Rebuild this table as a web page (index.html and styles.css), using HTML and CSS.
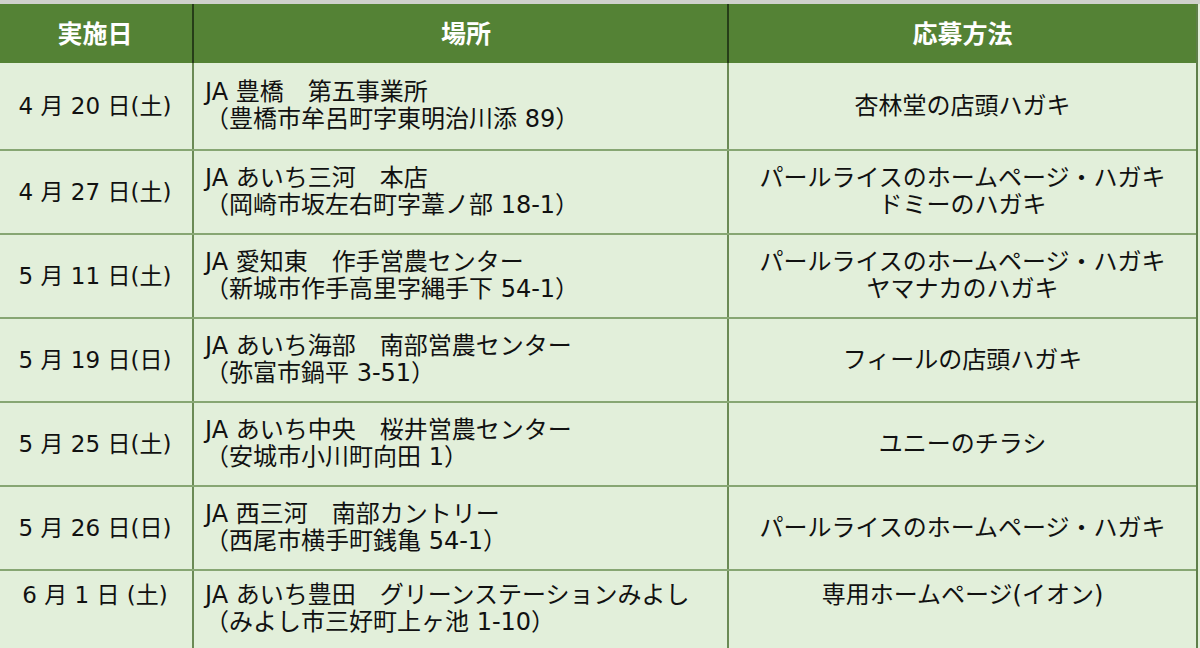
FILE: index.html
```html
<!DOCTYPE html>
<html lang="ja">
<head>
<meta charset="utf-8">
<link rel="stylesheet" href="styles.css">
</head>
<body>
<div class="topline"></div>
<div class="table">
  <div class="row head">
    <div class="cell c1">実施日</div>
    <div class="cell c2">場所</div>
    <div class="cell c3">応募方法</div>
  </div>
  <div class="row first">
    <div class="cell c1">4 月 20 日(土)</div>
    <div class="cell c2"><span>JA 豊橋　第五事業所</span><span>（豊橋市牟呂町字東明治川添 89）</span></div>
    <div class="cell c3"><span>杏林堂の店頭ハガキ</span></div>
  </div>
  <div class="row">
    <div class="cell c1">4 月 27 日(土)</div>
    <div class="cell c2"><span>JA あいち三河　本店</span><span>（岡崎市坂左右町字葦ノ部 18-1）</span></div>
    <div class="cell c3"><span>パールライスのホームページ・ハガキ</span><span>ドミーのハガキ</span></div>
  </div>
  <div class="row">
    <div class="cell c1">5 月 11 日(土)</div>
    <div class="cell c2"><span>JA 愛知東　作手営農センター</span><span>（新城市作手高里字縄手下 54-1）</span></div>
    <div class="cell c3"><span>パールライスのホームページ・ハガキ</span><span>ヤマナカのハガキ</span></div>
  </div>
  <div class="row">
    <div class="cell c1">5 月 19 日(日)</div>
    <div class="cell c2"><span>JA あいち海部　南部営農センター</span><span>（弥富市鍋平 3-51）</span></div>
    <div class="cell c3"><span>フィールの店頭ハガキ</span></div>
  </div>
  <div class="row">
    <div class="cell c1">5 月 25 日(土)</div>
    <div class="cell c2"><span>JA あいち中央　桜井営農センター</span><span>（安城市小川町向田 1）</span></div>
    <div class="cell c3"><span>ユニーのチラシ</span></div>
  </div>
  <div class="row">
    <div class="cell c1">5 月 26 日(日)</div>
    <div class="cell c2"><span>JA 西三河　南部カントリー</span><span>（西尾市横手町銭亀 54-1）</span></div>
    <div class="cell c3"><span>パールライスのホームページ・ハガキ</span></div>
  </div>
  <div class="row last">
    <div class="cell c1">6 月 1 日 (土)</div>
    <div class="cell c2"><span>JA あいち豊田　グリーンステーションみよし</span><span>（みよし市三好町上ヶ池 1-10）</span></div>
    <div class="cell c3"><span>専用ホームページ(イオン)</span></div>
  </div>
</div>
</body>
</html>
```

FILE: styles.css
```css
html, body {
  margin: 0;
  padding: 0;
  background: #e2efda;
  overflow: hidden;
}
body {
  width: 1200px;
  height: 648px;
  font-family: "DejaVu Sans", "Noto Sans CJK JP", sans-serif;
  color: #111;
}
.topline {
  height: 4px;
  background: #cfd1cc;
}
.table {
  width: 1198px;
  border-right: 2px solid #5f7f4a;
  box-sizing: border-box;
}
.row {
  display: grid;
  grid-template-columns: 192px 535px 1fr;
  height: 84px;
  border-bottom: 2px solid #87a673;
  box-sizing: border-box;
}
.row.first { height: 88px; }
.row.last { height: 90px; border-bottom: none; }
.row.head {
  height: 59px;
  background: #548235;
  border-bottom: none;
}
.cell {
  display: flex;
  flex-direction: column;
  justify-content: center;
  font-size: 24px;
  line-height: 27px;
}
.cell + .cell {
  border-left: 2px solid #6b8a55;
}
.head .cell {
  align-items: center;
  color: #fff;
  font-weight: bold;
  font-size: 25px;
  padding-top: 1px;
}
.head .cell + .cell {
  border-left: 2px solid #263d18;
}
.c1 {
  align-items: center;
  padding-right: 2px;
  font-size: 23px;
}
.head .c1 {
  font-size: 25px;
}
.c2 {
  padding-left: 11px;
}
.c3 {
  align-items: center;
}
.last .cell {
  justify-content: flex-start;
  padding-top: 11px;
}
```
